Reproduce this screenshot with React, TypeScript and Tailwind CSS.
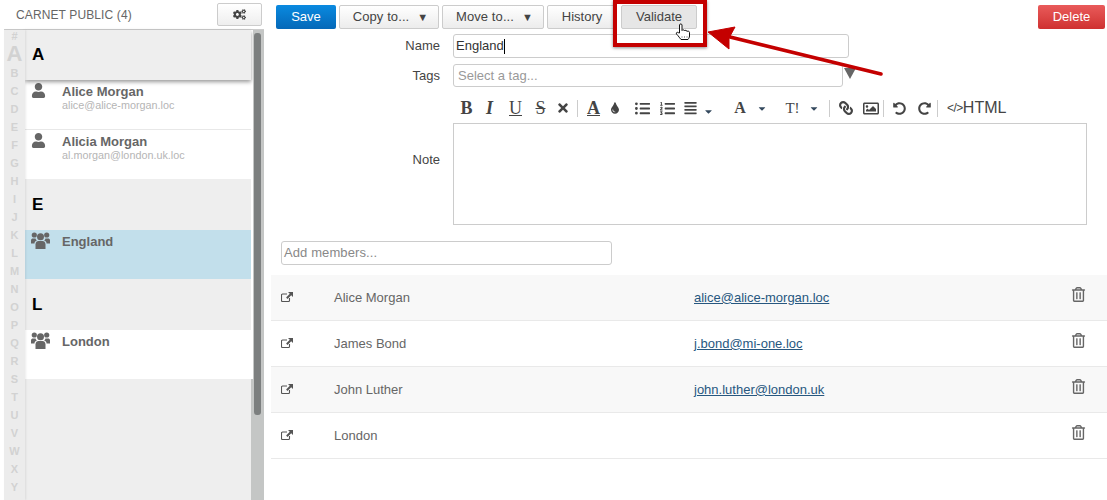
import {
  FaAlignJustify,
  FaCaretDown,
  FaCogs,
  FaLink,
  FaListOl,
  FaListUl,
  FaRedoAlt,
  FaRegImage,
  FaRegTrashAlt,
  FaTimes,
  FaTint,
  FaUndoAlt,
  FaUser,
} from "react-icons/fa";
import type { ReactNode } from "react";

const letters = ["B", "C", "D", "E", "F", "G", "H", "I", "J", "K", "L", "M", "N", "O", "P", "Q", "R", "S", "T", "U", "V", "W", "X", "Y"];

const members = [
  { name: "Alice Morgan", email: "alice@alice-morgan.loc" },
  { name: "James Bond", email: "j.bond@mi-one.loc" },
  { name: "John Luther", email: "john.luther@london.uk" },
  { name: "London", email: "" },
];

function UsersIcon() {
  return (
    <svg className="mt-[2px]" width="19" height="17" viewBox="0 0 19 17" fill="#666666">
      <circle cx="3.300" cy="3" r="2.600" />
      <circle cx="15.700" cy="3" r="2.600" />
      <circle cx="9.500" cy="4.700" r="3.500" />
      <path d="M4.500 17v-4.500c0-2.500 1.500-3.500 3-3.500h4c1.500 0 3 1 3 3.500V17z" />
      <path d="M0 11.500V8.500C0 7 1 6.500 2 6.500h2.600c.1 1 .8 1.600 1.400 2C4 9 3.500 10 3.500 11.500z" />
      <path d="M19 11.500V8.500C19 7 18 6.500 17 6.500h-2.600c-.1 1-.8 1.600-1.400 2 2 .5 2.500 1.500 2.500 3z" />
    </svg>
  );
}

function LinkOutIcon() {
  return (
    <svg width="12" height="10" viewBox="0 0 12 10" className="mb-[2px] text-[#555555]">
      <path d="M8.500 6v2.500a1 1 0 0 1-1 1h-6a1 1 0 0 1-1-1V3a1 1 0 0 1 1-1H6" fill="none" stroke="currentColor" strokeWidth="1.100" />
      <path d="M7 0h5v5l-1.800-1.800-3.700 3.700-1.400-1.400 3.700-3.700z" fill="currentColor" />
    </svg>
  );
}

function SectionHead({ letter, tall, shadow }: { letter: string; tall?: boolean; shadow?: boolean }) {
  return (
    <div className={`flex items-center bg-[#eeeeee] pl-[7px] text-[17px] font-bold text-black ${tall ? "h-[51px]" : "h-[50px]"} ${shadow ? "relative shadow-[0_2px_4px_rgba(0,0,0,0.4)]" : ""}`}>
      {letter}
    </div>
  );
}

function Contact({ name, email, group, active, border }: { name: string; email?: string; group?: boolean; active?: boolean; border?: boolean }) {
  return (
    <div className={`flex pl-[6px] ${active ? "bg-[#c2dfeb]" : "bg-white"} ${border ? "h-[50px] border-b border-[#e8e8e8]" : "h-[49px]"}`}>
      <div className="w-[31px] shrink-0">
        {group ? <UsersIcon /> : <FaUser className="mt-[3px] text-[15px] text-[#666666]" />}
      </div>
      <div className="pt-[4px]">
        <div className="text-[13px] leading-[15px] font-bold text-[#666666]">{name}</div>
        {email && <div className="text-[10.8px] leading-[12px] text-[#b5b5b5]">{email}</div>}
      </div>
    </div>
  );
}

function Sidebar() {
  return (
    <aside className="flex h-[500px] w-[264px] shrink-0 flex-col overflow-hidden">
      <div className="flex h-[29px] items-center justify-between pl-[16px] pr-[2px]">
        <span className="text-[12px] tracking-[0.12px] text-[#666666]">CARNET PUBLIC (4)</span>
        <button className="flex h-[23px] w-[45px] items-center justify-center rounded-[2px] border border-[#cccccc] bg-gradient-to-b from-white to-[#eeeeee] text-[13px] text-[#444444]">
          <FaCogs />
        </button>
      </div>
      <div className="ml-[4px] flex min-h-0 flex-1 border-t border-[#cccccc]">
        <div className="relative z-10 flex w-[21px] shrink-0 flex-col items-center bg-[#ececec] text-[11px] leading-[18px] font-bold text-[#d2d2d2] shadow-[1px_0_2px_rgba(0,0,0,0.08)]">
          <span className="h-[13px] leading-[13px]">#</span>
          <span className="h-[20.5px] text-[22px] leading-[22px]">A</span>
          {letters.map((l) => (
            <span key={l} className="h-[18px]">{l}</span>
          ))}
        </div>
        <div className="w-[226px] shrink-0 bg-[#eeeeee]">
          <SectionHead letter="A" shadow />
          <Contact name="Alice Morgan" email="alice@alice-morgan.loc" border />
          <Contact name="Alicia Morgan" email="al.morgan@london.uk.loc" />
          <SectionHead letter="E" tall />
          <Contact name="England" group active />
          <SectionHead letter="L" tall />
          <Contact name="London" group />
        </div>
        <div className="flex flex-1 flex-col">
          <div className="h-[349px] w-[2px] bg-white" />
          <div className="flex-1 bg-[#c4c6c5]" />
        </div>
        {/* scrollbar track and thumb */}
        <div className="relative w-[11px] shrink-0 bg-[#c4c6c5] pl-[1px] pt-[3px]">
          <div className="h-[382px] w-[7px] rounded-[3px] bg-[#7c7f7f]" />
        </div>
      </div>
    </aside>
  );
}

function Btn({ children, w }: { children: ReactNode; w: string }) {
  return (
    <button className={`flex h-[24px] items-center justify-center gap-[8px] rounded-[2px] border border-[#cccccc] bg-gradient-to-b from-white to-[#ececec] text-[13px] text-[#444444] ${w}`}>
      {children}
    </button>
  );
}

function Tool({ children, cls }: { children: ReactNode; cls: string }) {
  return <span className={`flex h-[20px] shrink-0 items-center justify-center text-[14px] text-[#444444] ${cls}`}>{children}</span>;
}

function Glyph({ children, cls }: { children: ReactNode; cls: string }) {
  return <span className={`flex h-[20px] shrink-0 items-center justify-center font-['Liberation_Serif',serif] text-[#444444] ${cls}`}>{children}</span>;
}

function Caret({ cls }: { cls: string }) {
  return <FaCaretDown className={`h-[11px] shrink-0 text-[#34495e] ${cls}`} />;
}

function Sep({ cls }: { cls: string }) {
  return <span className={`h-[17px] w-px shrink-0 bg-[#cccccc] ${cls}`} />;
}

function Editor() {
  return (
    <div className="ml-[189px] mt-[11px] flex h-[20px] items-center text-[#444444]">
      <Glyph cls="ml-[8px] w-[11px] text-[18px] font-bold">B</Glyph>
      <Glyph cls="ml-[13px] w-[9px] text-[18px] font-bold italic">I</Glyph>
      <Glyph cls="ml-[15px] w-[13px] text-[18px] underline">U</Glyph>
      <Glyph cls="ml-[12px] w-[13px] text-[18px] line-through">S</Glyph>
      <Tool cls="ml-[11px] w-[10px]"><FaTimes /></Tool>
      <Sep cls="ml-[9px]" />
      <Glyph cls="ml-[9px] w-[13px] text-[18px] font-bold underline">A</Glyph>
      <Tool cls="ml-[11px] w-[8px]"><FaTint className="text-[12px]" /></Tool>
      <Tool cls="ml-[16px] w-[15px]"><FaListUl className="text-[15px]" /></Tool>
      <Tool cls="ml-[10px] w-[15px]"><FaListOl className="text-[15px]" /></Tool>
      <Tool cls="ml-[9px] w-[13px]"><FaAlignJustify /></Tool>
      <Caret cls="ml-[8px] mt-[7px] w-[7px]" />
      <Glyph cls="ml-[21px] w-[14px] text-[16px] font-bold">A</Glyph>
      <Caret cls="ml-[11px] w-[8px]" />
      <Glyph cls="ml-[20px] w-[13px] text-[15px]">T!</Glyph>
      <Caret cls="ml-[11px] w-[8px]" />
      <Sep cls="ml-[11px]" />
      <Tool cls="ml-[9px] w-[14px]"><FaLink className="-scale-x-100" /></Tool>
      <Tool cls="ml-[10px] w-[16px]"><FaRegImage className="text-[17px]" /></Tool>
      <Sep cls="ml-[4px]" />
      <Tool cls="ml-[9px] w-[13px]"><FaUndoAlt className="text-[13px]" /></Tool>
      <Tool cls="ml-[11px] w-[14px]"><FaRedoAlt className="text-[13px]" /></Tool>
      <Sep cls="ml-[6px]" />
      <span className="ml-[9px] flex items-center text-[16px] text-[#444444]">
        <span className="text-[12px] tracking-[-0.5px]">&lt;/&gt;</span>HTML
      </span>
    </div>
  );
}

function Annotation() {
  return (
    <>
      <div className="absolute left-[613px] top-0 h-[47px] w-[94px] border-[4px] border-[#c40000] shadow-[0_1px_3px_rgba(0,0,0,0.45)]" />
      {/* arrow */}
      <svg className="absolute left-[700px] top-[20px]" width="190" height="60" viewBox="0 0 190 60">
        <path d="M181 54 L30 17" stroke="#c40000" strokeWidth="3.500" strokeLinecap="round" />
        <path d="M8 12 L35 7 L29 18 L29 29 Z" fill="#c40000" stroke="#c40000" strokeLinejoin="round" />
      </svg>
      {/* hand cursor */}
      <svg className="absolute left-[675px] top-[23px]" width="18" height="19" viewBox="0 0 18 19">
        <path
          d="M4.500 10V2c0-1.400 2.500-1.400 2.500 0v5.500c.3-1 2.500-1 2.500.5.3-1 2.500-1 2.500.6.3-.8 2.500-.6 2.500.8v3.600c0 1.500-.8 2.500-1.500 3.500H6c-.8-1-1.800-2.200-3-3.800L1.500 11c-.8-1.300.8-2.300 1.800-1.300z"
          fill="#fff"
          stroke="#111"
          strokeWidth="1"
        />
        <path d="M7 13.500v2M9.500 13.500v2M12 13.500v2" stroke="#555" strokeWidth="1" strokeDasharray="1 1" />
      </svg>
    </>
  );
}

function MemberRow({ name, email, odd }: { name: string; email: string; odd: boolean }) {
  return (
    <div className={`flex h-[46px] border-b border-[#e9e9e9] text-[13px] text-[#666666] ${odd ? "bg-[#f8f8f8]" : "bg-white"}`}>
      <div className="flex w-[63px] shrink-0 items-center pl-[10px]">
        <LinkOutIcon />
      </div>
      <div className="flex w-[360px] shrink-0 items-center">{name}</div>
      <div className="flex flex-1 items-center">
        <a className="text-[#27577f] underline">{email}</a>
      </div>
      <div className="w-[36px] shrink-0 pt-[12px]">
        <FaRegTrashAlt className="text-[15px] text-[#666666]" />
      </div>
    </div>
  );
}

export default function App() {
  return (
    <div className="relative flex h-[500px] w-[1107px] overflow-hidden bg-white font-['Liberation_Sans',Arial,sans-serif]">
      <Sidebar />
      <main className="min-w-0 flex-1">
        <div className="flex h-[34px] items-start gap-[3px] pl-[12px] pr-[2px] pt-[5px]">
          <button className="h-[24px] w-[60px] rounded-[2px] bg-gradient-to-b from-[#0a8ae0] to-[#0568b8] text-[13px] text-white">Save</button>
          <Btn w="w-[100px] pl-[3px] tracking-[0.1px]">Copy to... <span className="text-[11px]">▼</span></Btn>
          <Btn w="w-[102px] pl-[3px] tracking-[0.1px]">Move to... <span className="text-[11px]">▼</span></Btn>
          <Btn w="w-[70px]">History</Btn>
          <button className="ml-[1px] h-[24px] w-[76px] rounded-[2px] border border-[#cccccc] bg-[#e6e6e6] text-[13px] text-[#444444]">Validate</button>
          <button className="ml-auto h-[24px] w-[67px] rounded-[2px] bg-gradient-to-b from-[#e95a5a] to-[#cf3030] text-[13px] text-white">Delete</button>
        </div>
        <div className="flex h-[24px] items-center">
          <label className="w-[176px] text-right text-[13px] text-[#444444]">Name</label>
          <div className="ml-[13px] flex h-[24px] w-[396px] items-center rounded-[3px] border border-[#cccccc] pl-[2px] text-[13px] text-[#333333]">
            England<span className="h-[15px] w-px bg-black" />
          </div>
        </div>
        <div className="mt-[6px] flex h-[23px] items-center">
          <label className="w-[176px] text-right text-[13px] text-[#444444]">Tags</label>
          <div className="ml-[13px] flex h-[23px] w-[390px] items-center rounded-[3px] border border-[#cccccc] pl-[4px] text-[13px] text-[#999999]">Select a tag...</div>
          <span className="mb-[4px] ml-[1px] h-0 w-0 border-x-[6px] border-t-[11px] border-x-transparent border-t-[#666666]" />
        </div>
        <Editor />
        <div className="mt-[5px] flex">
          <label className="w-[176px] pt-[29px] text-right text-[13px] leading-[16px] text-[#444444]">Note</label>
          <div className="ml-[13px] h-[102px] w-[634px] border border-[#cccccc]" />
        </div>
        <div className="ml-[17px] mt-[16px] flex h-[24px] w-[331px] items-center rounded-[3px] border border-[#cccccc] pl-[2px] text-[13px] tracking-[0.1px] text-[#888888]">Add members...</div>
        <div className="ml-[7px] mt-[10px]">
          {members.map((m, i) => (
            <MemberRow key={m.name} name={m.name} email={m.email} odd={i % 2 === 0} />
          ))}
        </div>
      </main>
      <Annotation />
    </div>
  );
}
